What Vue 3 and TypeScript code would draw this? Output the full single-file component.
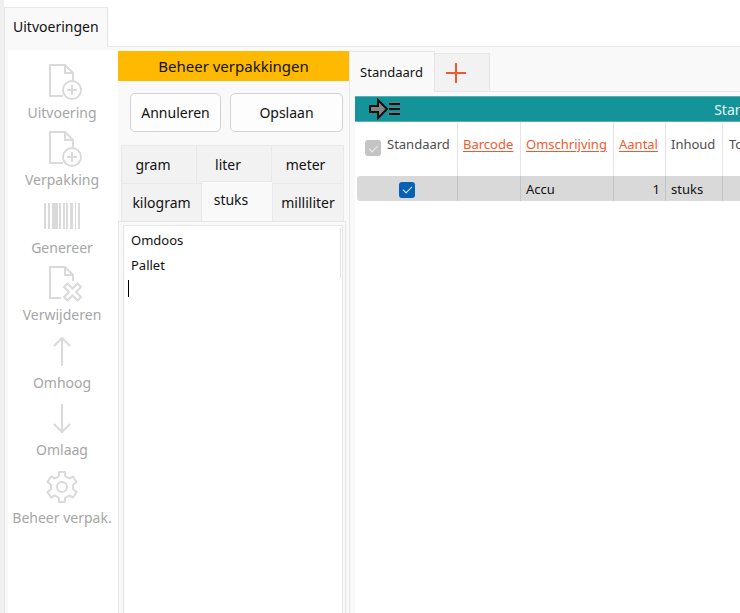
<script setup lang="ts">
import { ref } from 'vue'

type IconName = 'add' | 'barcode' | 'remove' | 'up' | 'down' | 'gear'

const actions: { label: string; icon: IconName }[] = [
  { label: 'Uitvoering', icon: 'add' },
  { label: 'Verpakking', icon: 'add' },
  { label: 'Genereer', icon: 'barcode' },
  { label: 'Verwijderen', icon: 'remove' },
  { label: 'Omhoog', icon: 'up' },
  { label: 'Omlaag', icon: 'down' },
  { label: 'Beheer verpak.', icon: 'gear' },
]

const upperUnits = ['gram', 'liter', 'meter']
const lowerUnits = ['kilogram', 'stuks', 'milliliter']
const activeUnit = ref('stuks')
const packages = ref('Omdoos\nPallet\n')
const allStandard = ref(true)
const rowStandard = ref(true)
</script>

<template>
  <div class="window">
    <div class="top-tabs" role="tablist">
      <button class="top-tab" role="tab" aria-selected="true">Uitvoeringen</button>
      <div class="top-rest"></div>
    </div>
    <div class="body">
      <aside class="sidebar">
        <nav class="actions">
          <button v-for="a in actions" :key="a.label" class="action" disabled>
            <svg viewBox="0 0 36 36" width="36" height="36" fill="none" stroke="#dadada" stroke-width="2">
              <template v-if="a.icon === 'add' || a.icon === 'remove'">
                <path v-if="a.icon === 'add'" d="M19 32H6V1H21L29 9V17" />
                <path v-else d="M17 32H6V1H21L29 9V15" />
                <path d="M21 1V9H29" />
              </template>
              <template v-if="a.icon === 'add'">
                <circle cx="28" cy="26" r="9" />
                <path d="M23 26H33M28 21V31" />
              </template>
              <path
                v-if="a.icon === 'remove'"
                d="M23.500 17.500L28.500 22.500L33.500 17.500L37 21L32 26L37 31L33.500 34.500L28.500 29.500L23.500 34.500L20 31L25 26L20 21Z"
              />
              <g v-if="a.icon === 'barcode'" fill="#dadada" stroke="none">
                <rect x="0" y="4" width="2" height="26" />
                <rect x="4" y="4" width="2" height="26" />
                <rect x="8" y="4" width="6" height="26" />
                <rect x="15" y="4" width="2" height="26" />
                <rect x="19" y="4" width="2" height="26" />
                <rect x="22" y="4" width="2" height="26" />
                <rect x="26" y="4" width="3" height="26" />
                <rect x="31" y="4" width="1" height="26" />
                <rect x="34" y="4" width="2" height="26" />
              </g>
              <path v-if="a.icon === 'up'" d="M18 32V4M10 12L18 4L26 12" />
              <path v-if="a.icon === 'down'" d="M18 3V31M10 23L18 31L26 23" />
              <template v-if="a.icon === 'gear'">
                <circle cx="18" cy="18" r="5" />
                <path
                  stroke-linejoin="round"
                  d="M15 3H21V7L25 9.500L29 7.500L32.500 13L29 16V20L32.500 23L29 28.500L25 26.500L21 29V33H15V29L11 26.500L7 28.500L3.500 23L7 20V16L3.500 13L7 7.500L11 9.500L15 7Z"
                />
              </template>
            </svg>
            <span>{{ a.label }}</span>
          </button>
        </nav>
      </aside>

      <section class="manage">
        <h2 class="manage-title">Beheer verpakkingen</h2>
        <div class="buttons">
          <button class="btn cancel">Annuleren</button>
          <button class="btn save">Opslaan</button>
        </div>
        <div class="units" role="tablist">
          <div class="unit-row upper">
            <button v-for="u in upperUnits" :key="u" class="unit" role="tab" @click="activeUnit = u">{{ u }}</button>
          </div>
          <div class="unit-row lower">
            <button
              v-for="u in lowerUnits"
              :key="u"
              class="unit"
              :class="{ active: activeUnit === u }"
              role="tab"
              :aria-selected="activeUnit === u"
              @click="activeUnit = u"
            >{{ u }}</button>
          </div>
        </div>
        <div class="editor">
          <textarea v-model="packages" aria-label="Verpakkingen" spellcheck="false"></textarea>
          <span class="caret"></span>
          <span class="scroll"></span>
        </div>
      </section>

      <main class="variants">
        <div class="variant-tabs" role="tablist">
          <button class="variant-tab" role="tab" aria-selected="true">Standaard</button>
          <button class="add-tab" aria-label="Toevoegen">
            <svg viewBox="0 0 22 22" width="22" height="22" stroke="#f0592f" stroke-width="2">
              <path d="M1 11H21M11 1V21" />
            </svg>
          </button>
          <div class="variant-rest"></div>
        </div>
        <div class="sheet">
          <div class="band">
            <svg viewBox="0 0 32 22" width="32" height="22" stroke="#111">
              <path d="M1 8H9V2L18 11L9 20V14H1Z" fill="#858585" stroke-width="2" />
              <path d="M20 6H31M20 11H31M20 16H31" stroke-width="2" />
              <path d="M20 4.500H31M20 9.500H31M20 14.500H31" stroke="#777" stroke-width="1" />
            </svg>
            <span>Standaard</span>
          </div>
          <table>
            <colgroup>
              <col class="c-std" /><col class="c-bar" /><col class="c-oms" /><col class="c-aan" /><col class="c-inh" /><col />
            </colgroup>
            <thead>
              <tr>
                <th>
                  <label class="head-check">
                    <input v-model="allStandard" type="checkbox" class="check grey" disabled />
                    <span>Standaard</span>
                  </label>
                </th>
                <th><a href="#">Barcode</a></th>
                <th><a href="#">Omschrijving</a></th>
                <th><a href="#">Aantal</a></th>
                <th>Inhoud</th>
                <th class="total">Totaal</th>
              </tr>
            </thead>
            <tbody>
              <tr>
                <td class="mid"><input v-model="rowStandard" type="checkbox" class="check" aria-label="Standaard" /></td>
                <td></td>
                <td>Accu</td>
                <td class="num">1</td>
                <td>stuks</td>
                <td></td>
              </tr>
            </tbody>
          </table>
        </div>
      </main>
    </div>
  </div>
</template>

<style>
body {
  background: #fff;
}
</style>

<style scoped>
* {
  box-sizing: border-box;
}
.window {
  display: flex;
  flex-direction: column;
  height: 100vh;
  overflow: hidden;
  border-left: 4px solid #f0f0f0;
  font-family: 'Noto Sans', 'Open Sans', sans-serif;
  font-size: 13px;
  color: #111;
}
button {
  margin: 0;
  padding: 0;
  border: 0;
  font: inherit;
  color: inherit;
  background: none;
}
.top-tabs {
  display: flex;
  flex: none;
  height: 47px;
  padding-top: 7px;
}
.top-tab {
  width: 104px;
  padding: 0 8px 2px;
  font-size: 14px;
  text-align: left;
  white-space: nowrap;
  background: #f9f9f9;
  border: 1px solid #e6e6e6;
  border-bottom: 0;
}
.top-rest {
  flex: 1;
  border-bottom: 1px solid #e6e6e6;
}
.body {
  display: flex;
  flex: 1;
  min-height: 0;
  padding-top: 3px;
  background: #f9f9f9;
  border-left: 1px solid #e6e6e6;
}
.sidebar {
  flex: none;
  width: 113px;
  padding-top: 14px;
  background: #fff;
  border-left: 3px solid #f9f9f9;
}
.actions {
  display: grid;
  grid-template-rows: repeat(7, 1fr);
  height: 472px;
  padding-right: 2px;
}
.action {
  display: flex;
  flex-direction: column;
  align-items: center;
  font-size: 14px;
  color: #a6a6a6;
  white-space: nowrap;
}
.action span {
  line-height: 26px;
}
.action svg {
  overflow: visible;
}
.manage {
  flex: none;
  display: flex;
  flex-direction: column;
  width: 232px;
  padding: 1px 3px 0 0;
  border-right: 1px solid #e6e6e6;
}
.manage-title {
  height: 30px;
  margin: 0 -3px 0 0;
  font-size: 15px;
  font-weight: 400;
  line-height: 30px;
  text-align: center;
  background: #ffb900;
}
.buttons {
  display: flex;
  gap: 9px;
  padding: 12px 3px 13px 12px;
}
.btn {
  height: 39px;
  font-size: 14px;
  background: #fdfdfd;
  border: 1px solid #d2d2d2;
  border-radius: 5px;
}
.cancel {
  width: 91px;
}
.save {
  flex: 1;
}
.units {
  padding: 0 2px 0 3px;
  font-size: 14px;
}
.unit-row {
  display: grid;
}
.upper {
  grid-template-columns: 75px 75px 1fr;
  height: 38px;
}
.lower {
  grid-template-columns: 80px 71px 1fr;
  height: 38px;
}
.unit {
  background: #f2f2f2;
  border: 1px solid #e8e8e8;
  border-width: 1px 0 0 1px;
}
.unit:last-child {
  border-right-width: 1px;
}
.upper .unit {
  padding-right: 12px;
}
.upper .unit:last-child {
  padding-right: 4px;
}
.unit.active {
  margin-top: -2px;
  padding: 0 12px 4px 0;
  background: #f9f9f9;
}
.editor {
  position: relative;
  flex: 1;
  display: flex;
  min-height: 0;
  padding: 3px 2px 0 4px;
  border: 1px solid #e6e6e6;
  border-bottom: 0;
}
textarea {
  flex: 1;
  width: 100%;
  padding: 2px 7px;
  font: inherit;
  line-height: 25px;
  color: #111;
  resize: none;
  overflow: hidden;
  outline: 0;
  background: #fff;
  border: 1px solid #e6e6e6;
  border-bottom: 0;
  border-radius: 0;
}
.caret {
  position: absolute;
  left: 9px;
  top: 58px;
  width: 1px;
  height: 17px;
  background: #000;
}
.scroll {
  position: absolute;
  right: 4px;
  top: 6px;
  width: 1px;
  height: 50px;
  background: #dfe3ea;
}
.variants {
  flex: 1;
  min-width: 0;
  overflow: hidden;
}
.variant-tabs {
  display: flex;
  height: 42px;
  padding-top: 1px;
}
.variant-tab {
  width: 85px;
  padding-right: 1px;
  border-top: 1px solid #e6e6e6;
  border-right: 1px solid #e6e6e6;
}
.add-tab {
  display: flex;
  align-items: center;
  width: 55px;
  margin-top: 2px;
  padding-left: 10px;
  background: #f2f2f2;
  border: 1px solid #e6e6e6;
  border-left: 0;
}
.variant-rest {
  flex: 1;
  border-bottom: 1px solid #e6e6e6;
}
.sheet {
  width: 791px;
  min-height: 100%;
  padding: 4px 0 0 5px;
}
.band {
  display: grid;
  grid-template-columns: 32px 1fr 32px;
  align-items: center;
  height: 26px;
  padding: 0 14px;
  font-size: 14px;
  text-align: center;
  color: #e6f5f5;
  background: #149399;
  border: 1px solid #5bb0b4;
  border-width: 1px 0;
}
table {
  width: 100%;
  table-layout: fixed;
  border-collapse: separate;
  border-spacing: 0;
  border-left: 2px solid #fff;
  background: #fff;
  box-shadow: 0 600px 0 600px #fff;
  clip-path: inset(0 0 -600px 0);
}
.c-std { width: 101px; }
.c-bar { width: 63px; }
.c-oms { width: 93px; }
.c-aan { width: 52px; }
.c-inh { width: 57px; }
th {
  height: 54px;
  padding: 12px 5px 0;
  font-weight: 400;
  line-height: 20px;
  text-align: left;
  vertical-align: top;
  white-space: nowrap;
  color: #4d4d4d;
  border-right: 1px solid #e4e4e4;
}
th a {
  color: #f0592f;
  text-underline-offset: 2px;
}
th:first-child {
  padding-left: 8px;
}
.head-check {
  display: flex;
  gap: 6px;
}
.head-check .check {
  margin-top: 6px;
}
th.total {
  padding-left: 6px;
}
td {
  height: 25px;
  padding: 0 5px;
  background: #d9d9d9;
  border-right: 1px solid #bfc5ca;
}
td:first-child {
  border-radius: 3px 0 0 3px;
}
td.mid {
  text-align: center;
}
td.num {
  text-align: right;
}
.check {
  appearance: none;
  flex: none;
  display: inline-grid;
  place-items: center;
  width: 16px;
  height: 16px;
  margin: 0;
  vertical-align: middle;
  background: #0560b8;
  border-radius: 3px;
}
.check.grey {
  background: #c4c4c4;
}
.check:checked::before {
  content: '';
  width: 8px;
  height: 4px;
  margin-bottom: 2px;
  border: solid #e8f1fa;
  border-width: 0 0 1px 1px;
  transform: rotate(-45deg);
}
</style>
